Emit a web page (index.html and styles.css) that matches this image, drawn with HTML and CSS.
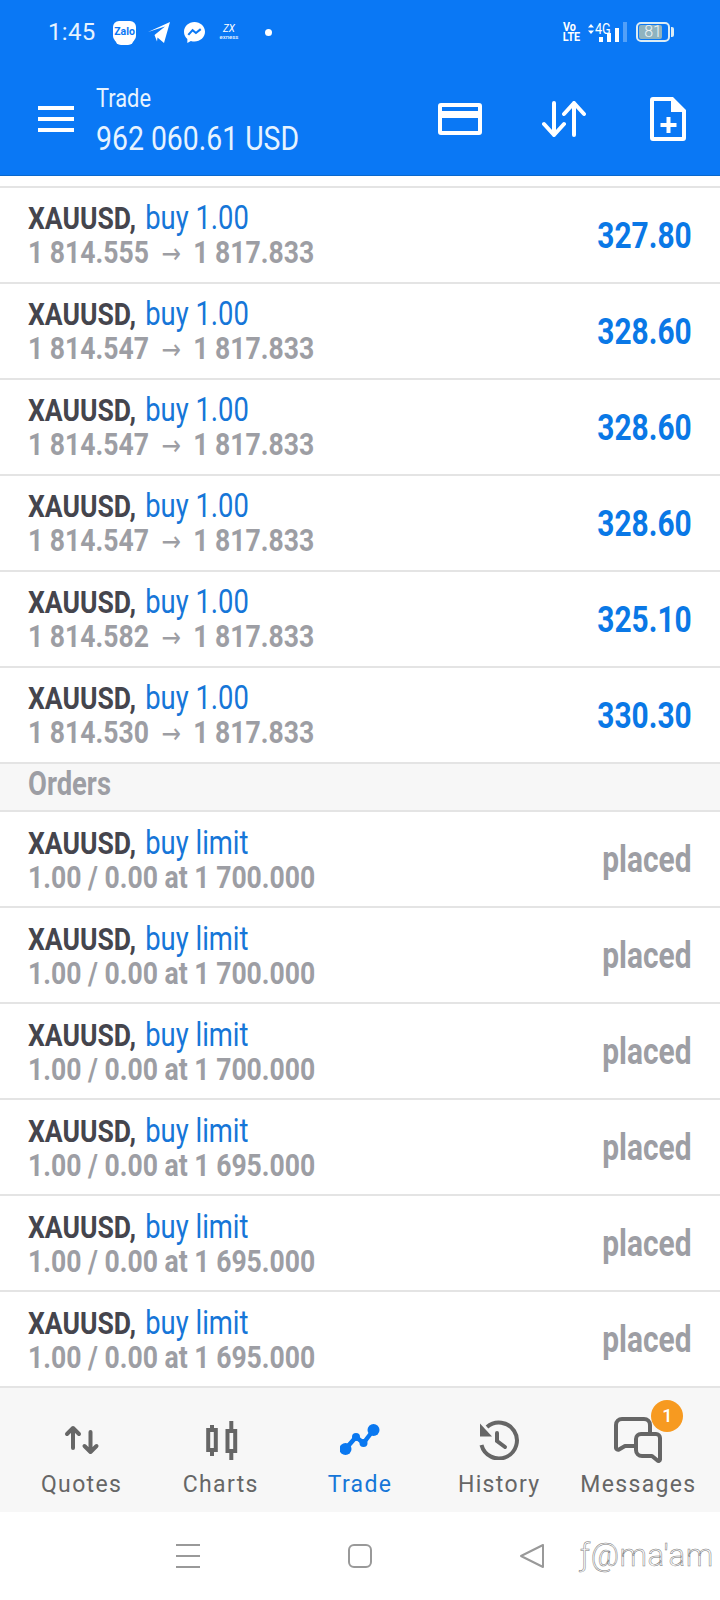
FILE: index.html
```html
<!DOCTYPE html>
<html lang="en">
<head>
    <meta charset="UTF-8">
    <meta name="viewport" content="width=device-width, initial-scale=1.0">
    <title>Trade</title>
    <link rel="stylesheet" href="styles.css">
</head>
<body>
<div class="screen">

    <header class="top">
        <div class="status">
            <span class="time">1:45</span>
            <span class="zalo">Zalo</span>
            <svg class="st-telegram" viewBox="0 0 22 21"><path fill="#fff" d="M0 10 22 0 16 21 9.500 15.500 9 19.500 6.500 13 17 4.500Z"/></svg>
            <svg class="st-messenger" viewBox="0 0 22 22"><path fill="#fff" d="M11 0C5 0 0 4.400 0 10.300c0 3.100 1.300 5.700 3.500 7.500V22l3.700-2.100c1.200.4 2.500.6 3.800.6 6 0 11-4.400 11-10.200S17 0 11 0Z"/><path fill="none" stroke="#0a78f5" stroke-width="2.200" d="M4.500 13.500 9 8.500l3.500 3 5-4"/></svg>
            <span class="exness"><b>ZX</b><i>exness</i></span>
            <span class="dot"></span>
            <span class="st-right">
                <span class="volte">Vo<br>LTE</span>
                <span class="net">
                    <svg class="net-updown" viewBox="0 0 6 10"><path fill="#fff" d="M3 0 6 3.500H0ZM3 10 0 6.500h6Z"/></svg>
                    <span class="net-4g">4G</span>
                    <span class="net-bars"><i class="b1"></i><i class="b2"></i><i class="b3"></i><i class="b4"></i></span>
                </span>
                <span class="battery"><span class="batt-fill"></span><span class="batt-num">81</span></span>
            </span>
        </div>
        <div class="toolbar">
            <div class="burger"><i></i><i></i><i></i></div>
            <div class="title">
                <div class="title-small">Trade</div>
                <div class="title-big">962 060.61 USD</div>
            </div>
            <div class="actions">
                <svg class="act-card" viewBox="0 0 44 32"><path fill="#fff" fill-rule="evenodd" d="M3 0h38a3 3 0 0 1 3 3v26a3 3 0 0 1-3 3H3a3 3 0 0 1-3-3V3a3 3 0 0 1 3-3Zm1 4v4h36V4Zm0 11v13h36V15Z"/></svg>
                <svg class="act-sort" viewBox="0 0 44 36"><g fill="none" stroke="#fff" stroke-width="4" stroke-linecap="round" stroke-linejoin="round"><path d="M12 2v32M2 23l10 11 10-11"/><path d="M32 34V2M22 13 32 2l10 11"/></g></svg>
                <svg class="act-file" viewBox="0 0 36 44"><path fill="#fff" fill-rule="evenodd" d="M3 0h20l13 13v28a3 3 0 0 1-3 3H3a3 3 0 0 1-3-3V3a3 3 0 0 1 3-3Zm1 4v36h28V15H21V4Z"/><path fill="#fff" d="M16.500 20h4v6h6v4h-6v6h-4v-6h-6v-4h6Z"/></svg>
            </div>
        </div>
    </header>

    <main class="list">
        <div class="row">
            <div class="row-left">
                <div class="line1"><span class="sym">XAUUSD,</span> <span class="side">buy 1.00</span></div>
                <div class="line2">1 814.555 <span class="arrow">→</span> 1 817.833</div>
            </div>
            <div class="profit">327.80</div>
        </div>
        <div class="row">
            <div class="row-left">
                <div class="line1"><span class="sym">XAUUSD,</span> <span class="side">buy 1.00</span></div>
                <div class="line2">1 814.547 <span class="arrow">→</span> 1 817.833</div>
            </div>
            <div class="profit">328.60</div>
        </div>
        <div class="row">
            <div class="row-left">
                <div class="line1"><span class="sym">XAUUSD,</span> <span class="side">buy 1.00</span></div>
                <div class="line2">1 814.547 <span class="arrow">→</span> 1 817.833</div>
            </div>
            <div class="profit">328.60</div>
        </div>
        <div class="row">
            <div class="row-left">
                <div class="line1"><span class="sym">XAUUSD,</span> <span class="side">buy 1.00</span></div>
                <div class="line2">1 814.547 <span class="arrow">→</span> 1 817.833</div>
            </div>
            <div class="profit">328.60</div>
        </div>
        <div class="row">
            <div class="row-left">
                <div class="line1"><span class="sym">XAUUSD,</span> <span class="side">buy 1.00</span></div>
                <div class="line2">1 814.582 <span class="arrow">→</span> 1 817.833</div>
            </div>
            <div class="profit">325.10</div>
        </div>
        <div class="row">
            <div class="row-left">
                <div class="line1"><span class="sym">XAUUSD,</span> <span class="side">buy 1.00</span></div>
                <div class="line2">1 814.530 <span class="arrow">→</span> 1 817.833</div>
            </div>
            <div class="profit">330.30</div>
        </div>

        <div class="section"><span class="section-text">Orders</span></div>

        <div class="row">
            <div class="row-left">
                <div class="line1"><span class="sym">XAUUSD,</span> <span class="side">buy limit</span></div>
                <div class="line2">1.00 / 0.00 at 1 700.000</div>
            </div>
            <div class="placed">placed</div>
        </div>
        <div class="row">
            <div class="row-left">
                <div class="line1"><span class="sym">XAUUSD,</span> <span class="side">buy limit</span></div>
                <div class="line2">1.00 / 0.00 at 1 700.000</div>
            </div>
            <div class="placed">placed</div>
        </div>
        <div class="row">
            <div class="row-left">
                <div class="line1"><span class="sym">XAUUSD,</span> <span class="side">buy limit</span></div>
                <div class="line2">1.00 / 0.00 at 1 700.000</div>
            </div>
            <div class="placed">placed</div>
        </div>
        <div class="row">
            <div class="row-left">
                <div class="line1"><span class="sym">XAUUSD,</span> <span class="side">buy limit</span></div>
                <div class="line2">1.00 / 0.00 at 1 695.000</div>
            </div>
            <div class="placed">placed</div>
        </div>
        <div class="row">
            <div class="row-left">
                <div class="line1"><span class="sym">XAUUSD,</span> <span class="side">buy limit</span></div>
                <div class="line2">1.00 / 0.00 at 1 695.000</div>
            </div>
            <div class="placed">placed</div>
        </div>
        <div class="row">
            <div class="row-left">
                <div class="line1"><span class="sym">XAUUSD,</span> <span class="side">buy limit</span></div>
                <div class="line2">1.00 / 0.00 at 1 695.000</div>
            </div>
            <div class="placed">placed</div>
        </div>
    </main>

    <nav class="tabs">
        <div class="tab">
            <svg class="tab-icon" viewBox="0 0 40 40"><g fill="none" stroke="#666" stroke-width="4" stroke-linecap="round" stroke-linejoin="round"><path d="M11 28V8M5 14l6-6 6 6"/><path d="M28.500 12v20M22.500 26l6 6 6-6"/></g></svg>
            <span>Quotes</span>
        </div>
        <div class="tab">
            <svg class="tab-icon" viewBox="0 0 40 40"><g fill="none" stroke="#666"><path stroke-width="4" d="M7.200 10h7.600v20H7.200ZM26.500 11h7.700v20h-7.700Z"/><path stroke-width="4" d="M11 5v4M11 31v5M30.300 1v9M30.300 32v8"/></g></svg>
            <span>Charts</span>
        </div>
        <div class="tab tab-active">
            <svg class="tab-icon" viewBox="0 0 40 40"><path fill="none" stroke="#0a78f0" stroke-width="4.500" stroke-linejoin="round" d="M5.500 29 16 17l7.500 6L33.500 10"/><g fill="#0a78f0"><circle cx="5.500" cy="29" r="6"/><circle cx="16" cy="17" r="4"/><circle cx="23.500" cy="23" r="4"/><circle cx="33.500" cy="10" r="6"/></g></svg>
            <span>Trade</span>
        </div>
        <div class="tab">
            <svg class="tab-icon" viewBox="0 0 40 40"><g fill="none" stroke="#666" stroke-width="4"><path d="M8 7A18 18 0 1 1 2.500 25"/><path stroke-linecap="round" d="M18 13v8l8 6"/></g><path fill="#666" d="M1 3.500V16.500H13Z"/></svg>
            <span>History</span>
        </div>
        <div class="tab">
            <span class="msg-wrap">
                <svg class="tab-icon tab-icon-msg" viewBox="0 0 48 46"><g fill="none" stroke="#666" stroke-width="4" stroke-linejoin="round"><path d="M22 29H11l-6 3.500a2 2 0 0 1-3-1.500V8a6 6 0 0 1 6-6h22a6 6 0 0 1 6 6v8"/><path d="M27 17h15a4 4 0 0 1 4 4v21.500a1.500 1.500 0 0 1-2.500 1L38 39H28a6 6 0 0 1-6-6V22a5 5 0 0 1 5-5Z"/></g></svg>
                <span class="badge">1</span>
            </span>
            <span>Messages</span>
        </div>
    </nav>

    <div class="sysnav">
        <svg class="sys-icon" viewBox="0 0 24 24"><path fill="none" stroke="#999" stroke-width="2" d="M0 1h24M0 12h24M0 23h24"/></svg>
        <svg class="sys-icon" viewBox="0 0 24 24"><rect x="1" y="1" width="22" height="22" rx="5" fill="none" stroke="#999" stroke-width="2"/></svg>
        <svg class="sys-icon" viewBox="0 0 24 24"><path fill="none" stroke="#999" stroke-width="2" stroke-linejoin="round" d="M23 1v22L1 12Z"/></svg>
        <div class="watermark">ƒ@ma'am</div>
    </div>

</div>
</body>
</html>
```

FILE: styles.css
```css
* {
    box-sizing: border-box;
}

body {
    margin: 0;
    background-color: #fff;
    font-family: Roboto, "Liberation Sans", sans-serif;
}

.screen {
    position: relative;
    width: 720px;
    height: 1600px;
    overflow: hidden;
    display: flex;
    flex-direction: column;
}

/* blue header */
.top {
    height: 176px;
    background-color: #0a78f5;
    border-bottom: 1px solid #0a68cc;
    color: #fff;
}

.status {
    height: 64px;
    padding-left: 48px;
    display: flex;
    align-items: center;
}

.time {
    font-size: 24px;
    letter-spacing: 0.3px;
    width: 65px;
    color: #e6f3ff;
}

.zalo {
    position: relative;
    width: 23px;
    height: 21px;
    margin-top: -2px;
    border-radius: 6px;
    background-color: #fff;
    color: #0a78f5;
    font-size: 10.500px;
    font-weight: 700;
    line-height: 21px;
    text-align: center;
    white-space: nowrap;
}

.zalo::after {
    content: "";
    position: absolute;
    left: 2px;
    right: 2px;
    bottom: -3px;
    height: 6px;
    border-radius: 0 0 6px 6px;
    background-color: #fff;
}

.st-telegram {
    width: 22px;
    height: 21px;
    margin-left: 12px;
}

.st-messenger {
    width: 21px;
    height: 21px;
    margin-left: 14px;
}

.exness {
    width: 18px;
    margin-left: 15px;
    display: flex;
    flex-direction: column;
    align-items: center;
    line-height: 1;
}

.exness b {
    font-size: 10px;
    font-weight: 400;
    font-style: italic;
}

.exness i {
    font-size: 6px;
    font-style: normal;
}

.dot {
    width: 7px;
    height: 7px;
    border-radius: 50%;
    background-color: #fff;
    margin-left: 27px;
}

.st-right {
    margin-left: auto;
    margin-right: 50px;
    display: flex;
    align-items: center;
}

.volte {
    width: 15px;
    font-size: 12px;
    font-weight: 700;
    line-height: 10px;
    text-align: center;
    transform: scaleX(0.9);
}

.net {
    position: relative;
    width: 37px;
    height: 20px;
    margin-left: 11px;
}

.net-updown {
    position: absolute;
    left: 0;
    top: 2px;
    width: 6px;
    height: 10px;
}

.net-4g {
    position: absolute;
    left: 7px;
    top: 0;
    font-size: 14px;
    line-height: 14px;
    transform: scaleX(0.9);
    transform-origin: left center;
}

.net-bars {
    position: absolute;
    left: 11px;
    bottom: 0;
    display: flex;
    align-items: flex-end;
    gap: 4.500px;
}

.net-bars i {
    display: block;
    width: 3.500px;
    background-color: #fff;
}

.net-bars .b1 { height: 5px; }
.net-bars .b2 { height: 9px; }
.net-bars .b3 { height: 14px; }
.net-bars .b4 { height: 20px; opacity: 0.3; }

.battery {
    position: relative;
    width: 34px;
    height: 20px;
    margin-left: 11px;
    border: 2px solid #dcecf4;
    border-radius: 5px;
    padding: 1px;
    display: flex;
}

.battery::after {
    content: "";
    position: absolute;
    right: -6px;
    top: 3px;
    width: 3px;
    height: 10px;
    border-radius: 0 2px 2px 0;
    background-color: #dcecf4;
}

.batt-fill {
    width: 81%;
    background-color: #8fb3bf;
    border-radius: 2px;
}

.batt-num {
    position: absolute;
    left: 0;
    right: 0;
    top: 0;
    font-size: 16px;
    font-weight: 300;
    line-height: 16px;
    text-align: center;
    color: #f0f6f8;
}

.toolbar {
    height: 111px;
    display: flex;
    align-items: center;
    padding-bottom: 1px;
}

.burger {
    width: 36px;
    margin-left: 38px;
    display: flex;
    flex-direction: column;
    gap: 7px;
}

.burger i {
    display: block;
    height: 4px;
    background-color: #fff;
}

.title {
    margin-left: 22px;
    margin-top: 3px;
}

.title-small,
.title-big {
    transform-origin: left center;
    white-space: nowrap;
    color: #e6f3ff;
}

.title-small {
    font-size: 26px;
    line-height: 34px;
    transform: scaleX(0.84);
}

.title-big {
    margin-top: 2px;
    font-size: 33px;
    line-height: 44px;
    transform: scaleX(0.86);
}

.actions {
    margin-left: auto;
    margin-right: 34px;
    display: flex;
    align-items: center;
}

.act-card {
    width: 44px;
    height: 32px;
}

.act-sort {
    width: 44px;
    height: 36px;
    margin-left: 60px;
}

.act-file {
    width: 36px;
    height: 44px;
    margin-left: 64px;
}

/* position and order rows */
.list {
    flex: 1;
    padding-top: 10px;
}

.row {
    height: 96px;
    border-top: 2px solid #e4e4e4;
    padding: 0 28px;
    display: flex;
    justify-content: space-between;
    align-items: center;
}

.row-left {
    white-space: nowrap;
    margin-top: 2px;
}

.line1,
.line2 {
    font-size: 32px;
    line-height: 34px;
    transform: scaleX(0.83);
    transform-origin: left center;
}

.sym {
    font-weight: 700;
    color: #45454d;
}

.side {
    margin-left: 3px;
    font-size: 33px;
    color: #1676d8;
}

.line2 {
    font-weight: 700;
    color: #9d9ea4;
}

.arrow {
    margin: 0 7px;
    font-family: "DejaVu Sans", sans-serif;
    font-weight: 400;
    font-size: 28px;
}

.profit,
.placed {
    padding-top: 2px;
    font-size: 36px;
    font-weight: 700;
    transform: scaleX(0.83);
    transform-origin: right center;
    white-space: nowrap;
}

.profit {
    color: #0a78e6;
}

.placed {
    color: #9d9ea4;
}

.section {
    height: 48px;
    border-top: 2px solid #e4e4e4;
    background-color: #f7f7f7;
    padding-left: 28px;
    line-height: 40px;
}

.section-text {
    display: inline-block;
    font-size: 33px;
    font-weight: 700;
    color: #9d9ea4;
    transform: scaleX(0.83);
    transform-origin: left center;
}

/* bottom tabs */
.tabs {
    height: 126px;
    border-top: 2px solid #e4e4e4;
    background-color: #f7f7f7;
    padding: 0 12px;
    display: grid;
    grid-template-columns: repeat(5, 1fr);
}

.tab {
    display: flex;
    flex-direction: column;
    align-items: center;
    font-size: 23px;
    letter-spacing: 1.350px;
    color: #666;
    padding-top: 32px;
    white-space: nowrap;
}

.tab-active {
    color: #1676d8;
}

.tab-icon {
    display: block;
    width: 40px;
    height: 40px;
    margin-bottom: 11px;
}

.tab-icon-msg {
    width: 48px;
    height: 46px;
    margin-bottom: 8px;
}

.msg-wrap {
    position: relative;
    margin-top: -3px;
}

.badge {
    position: absolute;
    right: -21px;
    top: -17px;
    width: 32px;
    height: 32px;
    border-radius: 50%;
    background-color: #f79a20;
    color: #fff;
    font-size: 18px;
    font-weight: 500;
    line-height: 32px;
    text-align: center;
    letter-spacing: 0;
}

/* android buttons */
.sysnav {
    height: 88px;
    display: flex;
    justify-content: center;
    align-items: center;
    gap: 148px;
    position: relative;
}

.sys-icon {
    width: 24px;
    height: 24px;
}

.watermark {
    position: absolute;
    left: 580px;
    top: 26px;
    font-size: 31px;
    font-weight: 300;
    line-height: 36px;
    letter-spacing: 0.5px;
    color: #fff;
    -webkit-text-stroke: 0.5px #777;
    white-space: nowrap;
}
```
